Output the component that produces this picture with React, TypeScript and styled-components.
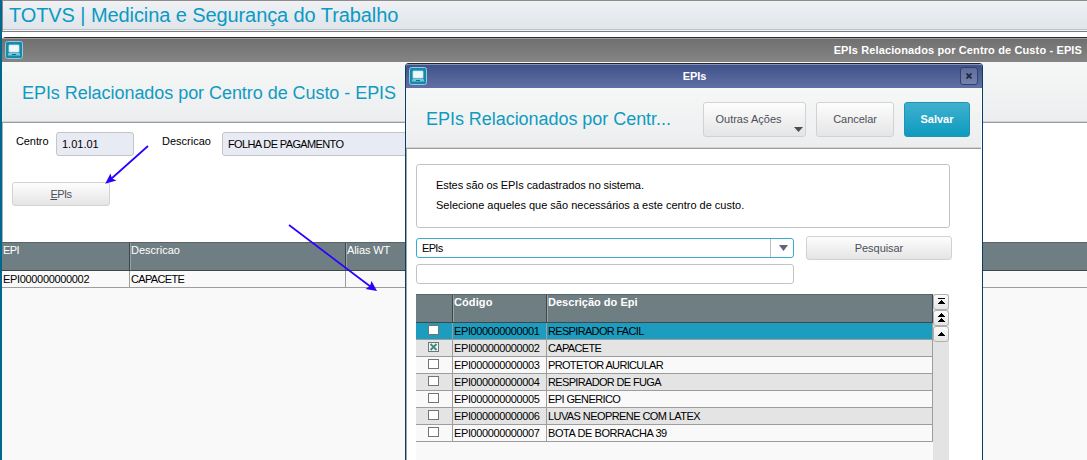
import React from 'react';
import styled, { createGlobalStyle } from 'styled-components';

const Global = createGlobalStyle`
  * { box-sizing: border-box; }
  html, body { margin: 0; padding: 0; overflow: hidden; }
  body { font: 11px/13px "Liberation Sans", Arial, sans-serif; color: #000; background: #fff; }
`;

const Screen = styled.div`
  position: relative;
  width: 1087px;
  height: 460px;
  overflow: hidden;
  background: #fff;
  border-left: 2px solid #00688c;
`;

const Text = styled.span<{ $ls?: number; $bold?: boolean; $color?: string }>`
  display: block;
  white-space: pre;
  letter-spacing: ${p => p.$ls ?? 0}px;
  font-weight: ${p => (p.$bold ? 'bold' : 'normal')};
  color: ${p => p.$color ?? 'inherit'};
`;

const AppHeader = styled.header`
  height: 32px;
  border: 1px solid #8c8c8c;
  border-right: 0;
  border-bottom-color: #7c7c7c;
  background: linear-gradient(#eff1f4, #e0e5ea 28px, #b8c4c9 28px, #b8c4c9 29px, #f2f4f6 29px);
  padding: 1px 0 0 6px;
  font-size: 20px;
  line-height: 26px;
  color: #0a9ac4;
`;

const MainWindow = styled.main`
  margin-top: 5px;
  display: flex;
  flex-direction: column;
  height: 423px;
  border-top: 1px solid #2c2c2c;
  border-top-left-radius: 4px;
`;

const TitleBar = styled.div<{ $blue?: boolean }>`
  display: flex;
  align-items: center;
  flex: none;
  height: 24px;
  color: #fff;
  border-top: 1px solid ${p => (p.$blue ? '#8490b4' : '#a0a0a0')};
  background: ${p => (p.$blue ? 'linear-gradient(#40528b, #6070a4)' : 'linear-gradient(#707070, #858585)')};
  justify-content: ${p => (p.$blue ? 'space-between' : 'flex-start')};
  padding: ${p => (p.$blue ? '0 4px 0 3px' : '0 5px 0 3px')};

  > svg { margin-bottom: 1px; }
`;

const TitleEnd = styled.div`margin-left: auto;`;

const PageHead = styled.div`
  flex: none;
  height: 61px;
  padding: 21px 0 0 20px;
  font-size: 18px;
  line-height: 21px;
  color: #0f9bc1;
  background: linear-gradient(#f6f8f7, #ecedef);
  border-bottom: 1px solid #9c9c9c;
  box-shadow: inset 0 -1px #d4d4d4;
`;

const Form = styled.div`
  flex: none;
  height: 119px;
  border-left: 1px solid #a9b0b4;
  padding: 9px 0 0 9px;
`;

const FieldRow = styled.div`
  display: flex;
  height: 24px;
`;

const FieldLabel = styled.label<{ $w: number }>`
  width: ${p => p.$w}px;
  padding: 3px 0 0 4px;
`;

const ReadonlyField = styled.div<{ $w: number; $gap?: number }>`
  flex: none;
  width: ${p => p.$w}px;
  height: 24px;
  margin-right: ${p => p.$gap ?? 0}px;
  padding: 5px 0 0 5px;
  border: 1px solid #c2c5ca;
  border-radius: 3px;
  background: #e8ebf3;
`;

const Button = styled.button<{ $w: number; $h: number; $primary?: boolean; $menu?: boolean }>`
  position: relative;
  display: flex;
  align-items: center;
  justify-content: center;
  width: ${p => p.$w}px;
  height: ${p => p.$h}px;
  padding: 0 ${p => (p.$menu ? 12 : 0)}px 0 0;
  font: inherit;
  border: 1px solid ${p => (p.$primary ? '#2095b3' : '#d2d2d2')};
  border-radius: 3px;
  color: ${p => (p.$primary ? '#fff' : '#4c4f59')};
  background: ${p => (p.$primary ? 'linear-gradient(#40b0cf, #0d9bbf)' : 'linear-gradient(#fdfdfd, #e5e5e5)')};
`;

const ButtonSlot = styled.div`
  margin-top: 26px;
`;

const Grid = styled.div`
  flex: 1;
  background: #f9f9f9;
`;

const HeadRow = styled.div<{ $cols: string }>`
  display: grid;
  grid-template-columns: ${p => p.$cols};
  height: 29px;
  color: #fff;
  background: #6f7e82;
  border-top: 1px solid #596467;
  border-bottom: 1px solid #3f474a;
`;

const HeadCell = styled.div<{ $open?: boolean }>`
  padding: 1px 0 0 1px;
  border-right: ${p => (p.$open ? 'none' : '1px solid #3f474a')};
  box-shadow: ${p => (p.$open ? 'none' : '1px 0 #98a3a6')};
`;

const Row = styled.div<{ $cols: string; $bg: string }>`
  display: grid;
  grid-template-columns: ${p => p.$cols};
  height: 17px;
  line-height: 16px;
  background: ${p => p.$bg};
  border-bottom: 1px solid #9d9d9d;
`;

const Cell = styled.div<{ $center?: boolean; $open?: boolean }>`
  padding-left: ${p => (p.$center ? 12 : 1)}px;
  padding-top: ${p => (p.$center ? 2 : 0)}px;
  border-right: ${p => (p.$open ? 'none' : '1px solid #9d9d9d')};
`;

const Dialog = styled.section`
  position: absolute;
  left: 403px;
  top: 63px;
  width: 578px;
  height: 400px;
  display: flex;
  flex-direction: column;
  border: 1px solid #083d66;
  border-top-color: #25262d;
  border-radius: 4px 4px 0 0;
  overflow: hidden;
  background: #fff;
`;

const DialogTitle = styled.div`
  padding-left: 2px;
`;

const CloseBox = styled.div`
  width: 18px;
  height: 18px;
  margin-bottom: 1px;
  display: flex;
  align-items: center;
  justify-content: center;
  border: 1px solid #31416f;
  border-radius: 3px;
  background: linear-gradient(#5e6c9a, #7683b0);
`;

const DialogHead = styled.div`
  display: flex;
  flex: none;
  height: 61px;
  width: 575px;
  padding: 14px 11px 0 20px;
  background: linear-gradient(#f6f8f7, #ecedef);
  border-bottom: 1px solid #9c9c9c;
  box-shadow: inset 0 -1px #d4d4d4;
`;

const DialogHeading = styled.h1`
  flex: 1;
  margin: 0;
  padding-top: 7px;
  font-weight: normal;
  font-size: 18px;
  line-height: 21px;
  color: #0f9bc1;
`;

const Actions = styled.div`
  display: flex;
  gap: 10px;
`;

const Corner = styled.svg`
  position: absolute;
  right: 2px;
  bottom: 4px;
`;

const DialogBody = styled.div`
  flex: 1;
  padding: 15px 0 0 9px;
  border-left: 1px solid #a5a5a5;
`;

const Note = styled.div`
  width: 534px;
  height: 64px;
  padding: 10px 0 0 19px;
  line-height: 20px;
  border: 1px solid #c3c3c3;
  border-radius: 3px;
`;

const SearchRow = styled.div`
  display: flex;
  gap: 12px;
  margin-top: 8px;
`;

const Combo = styled.div`
  display: flex;
  justify-content: space-between;
  width: 378px;
  height: 20px;
  margin-top: 2px;
  padding-left: 5px;
  line-height: 18px;
  border: 1px solid #35acca;
  border-radius: 3px;
  background: #fff;
`;

const ComboArrow = styled.div`
  display: flex;
  width: 23px;
  padding: 6px 0 0 8px;
  border-left: 1px solid #bcbcbc;
`;

const SearchInput = styled.div`
  width: 378px;
  height: 20px;
  margin-top: 4px;
  border: 1px solid #c3c3c3;
  border-radius: 3px;
`;

const TableArea = styled.div`
  display: flex;
  width: 533px;
  height: 170px;
  margin-top: 10px;
`;

const Scroll = styled.div`
  width: 16px;
  background: #e3e3e3;
`;

const ScrollButton = styled.div`
  display: flex;
  width: 16px;
  height: 16px;
  align-items: center;
  justify-content: center;
  border: 1px solid #b0b0b0;
  border-radius: 3px;
  background: linear-gradient(#fbfbfb, #e6e6e6);
`;

const Annotations = styled.svg`
  position: absolute;
  left: -2px;
  top: 0;
  pointer-events: none;
`;

const AppIcon = () => (
  <svg width="18" height="18" viewBox="0 0 18 18">
    <rect x="0.5" y="0.5" width="17" height="17" rx="2" fill="#168aae" stroke="#93cad8" />
    <rect x="4" y="4" width="10" height="7" rx="0.5" fill="#eef8fa" stroke="#c3e2ea" strokeWidth="0.8" />
    <path d="M3.500 11.800h11l0.800 2.700H2.700z" fill="#7fc5d8" />
    <rect x="7" y="13" width="4" height="1" fill="#11708f" />
  </svg>
);

const Box = styled.svg`display: block;`;

const CheckBox = ({ checked }: { checked?: boolean }) => (
  <Box width="11" height="10" viewBox="0 0 11 10" shapeRendering="crispEdges">
    <rect x="0.5" y="0.5" width="10" height="9" fill={checked ? '#f0f3f3' : '#fff'} stroke="#747474" />
    {checked && <path d="M2.500 2L8.500 8M8.500 2L2.500 8" stroke="#3a8a84" strokeWidth="1.800" shapeRendering="auto" />}
  </Box>
);

const UP = 'M3 0h1v1h1v1h1v1h1v1H0V3h1V2h1V1h1z';
const Glyph = ({ kind }: { kind: 'first' | 'page' | 'line' }) => (
  <svg width="7" height="10" viewBox="0 0 7 10" shapeRendering="crispEdges">
    {kind === 'first' && <path d="M0 1h7v1H0z" />}
    {kind === 'page' && <path d={UP} />}
    <path d={UP} transform={kind === 'page' ? 'translate(0 5)' : 'translate(0 3)'} />
  </svg>
);

const MAIN_COLS = '128px 216px 1fr';
const EPI_COLS = '37px 94px 1fr';
const EPIS: [string, number][] = [
  ['RESPIRADOR FACIL', -0.67],
  ['CAPACETE', -0.66],
  ['PROTETOR AURICULAR', -0.66],
  ['RESPIRADOR DE FUGA', -0.66],
  ['EPI GENERICO', -0.6],
  ['LUVAS NEOPRENE COM LATEX', -0.58],
  ['BOTA DE BORRACHA 39', -0.43],
];

export default function App() {
  return (
    <>
      <Global />
      <Screen>
        <AppHeader><Text $ls={-0.09}>TOTVS | Medicina e Segurança do Trabalho</Text></AppHeader>
        <MainWindow>
          <TitleBar>
            <AppIcon />
            <TitleEnd><Text $bold $ls={0.13}>EPIs Relacionados por Centro de Custo - EPIS</Text></TitleEnd>
          </TitleBar>
          <PageHead><Text $ls={-0.05}>EPIs Relacionados por Centro de Custo - EPIS</Text></PageHead>
          <Form>
            <FieldRow>
              <FieldLabel $w={44}><Text $ls={-0.1}>Centro</Text></FieldLabel>
              <ReadonlyField $w={78} $gap={24}><Text>1.01.01</Text></ReadonlyField>
              <FieldLabel $w={64}><Text>Descricao</Text></FieldLabel>
              <ReadonlyField $w={400}><Text $ls={-0.63}>FOLHA DE PAGAMENTO</Text></ReadonlyField>
            </FieldRow>
            <ButtonSlot>
              <Button $w={98} $h={24}><Text $ls={-0.5}><u>E</u>PIs</Text></Button>
            </ButtonSlot>
          </Form>
          <Grid>
            <HeadRow $cols={MAIN_COLS}>
              <HeadCell><Text $ls={-0.6}>EPI</Text></HeadCell>
              <HeadCell><Text>Descricao</Text></HeadCell>
              <HeadCell $open><Text $ls={-0.1}>Alias WT</Text></HeadCell>
            </HeadRow>
            <Row $cols={MAIN_COLS} $bg="#f9f9f9">
              <Cell><Text $ls={-0.33}>EPI000000000002</Text></Cell>
              <Cell><Text $ls={-0.66}>CAPACETE</Text></Cell>
              <Cell $open />
            </Row>
          </Grid>
        </MainWindow>

        <Dialog>
          <TitleBar $blue>
            <AppIcon />
            <DialogTitle><Text $bold $ls={-0.1}>EPIs</Text></DialogTitle>
            <CloseBox>
              <svg width="6" height="6" viewBox="0 0 6 6"><path d="M0.500 0.500L5.500 5.500M5.500 0.500L0.500 5.500" stroke="#20263c" strokeWidth="1.800" /></svg>
            </CloseBox>
          </TitleBar>
          <DialogHead>
            <DialogHeading><Text $ls={-0.04}>EPIs Relacionados por Centr...</Text></DialogHeading>
            <Actions>
              <Button $w={103} $h={35} $menu>
                <Text>Outras Ações</Text>
                <Corner width="9" height="5" viewBox="0 0 9 5"><path d="M0 0h9L4.500 5z" fill="#4a4d57" /></Corner>
              </Button>
              <Button $w={78} $h={35}><Text $ls={-0.05}>Cancelar</Text></Button>
              <Button $w={66} $h={35} $primary><Text $bold>Salvar</Text></Button>
            </Actions>
          </DialogHead>
          <DialogBody>
            <Note>
              <Text $ls={-0.09}>Estes são os EPIs cadastrados no sistema.</Text>
              <Text>Selecione aqueles que são necessários a este centro de custo.</Text>
            </Note>
            <SearchRow>
              <Combo>
                <Text $ls={-0.7}>EPIs</Text>
                <ComboArrow><svg width="9" height="6" viewBox="0 0 9 6"><path d="M0 0h9L4.500 6z" fill="#5f6678" /></svg></ComboArrow>
              </Combo>
              <Button $w={146} $h={24}><Text $ls={-0.05}>Pesquisar</Text></Button>
            </SearchRow>
            <SearchInput />
            <TableArea>
              <Grid>
                <HeadRow $cols={EPI_COLS}>
                  <HeadCell />
                  <HeadCell><Text $bold $ls={0.1}>Código</Text></HeadCell>
                  <HeadCell><Text $bold $ls={0.02}>Descrição do Epi</Text></HeadCell>
                </HeadRow>
                {EPIS.map(([name, ls], i) => (
                  <Row key={name} $cols={EPI_COLS} $bg={i === 0 ? '#1c9dc0' : i % 2 ? '#e4e4e4' : '#f9f9f9'}>
                    <Cell $center><CheckBox checked={i === 1} /></Cell>
                    <Cell><Text $ls={-0.37}>{`EPI00000000000${i + 1}`}</Text></Cell>
                    <Cell><Text $ls={ls}>{name}</Text></Cell>
                  </Row>
                ))}
              </Grid>
              <Scroll>
                <ScrollButton><Glyph kind="first" /></ScrollButton>
                <ScrollButton><Glyph kind="page" /></ScrollButton>
                <ScrollButton><Glyph kind="line" /></ScrollButton>
              </Scroll>
            </TableArea>
          </DialogBody>
        </Dialog>

        <Annotations width="1087" height="460" viewBox="0 0 1087 460" stroke="#2b00ff" fill="#2b00ff">
          <path d="M148 146L111 179M289 225L371 287" strokeWidth="1.700" fill="none" />
          <path d="M105.200 183.700L110.500 173.500L112 178.500L116.500 180.500z" stroke="none" />
          <path d="M377 291L365.500 289L370 286L371.500 281z" stroke="none" />
        </Annotations>
      </Screen>
    </>
  );
}
